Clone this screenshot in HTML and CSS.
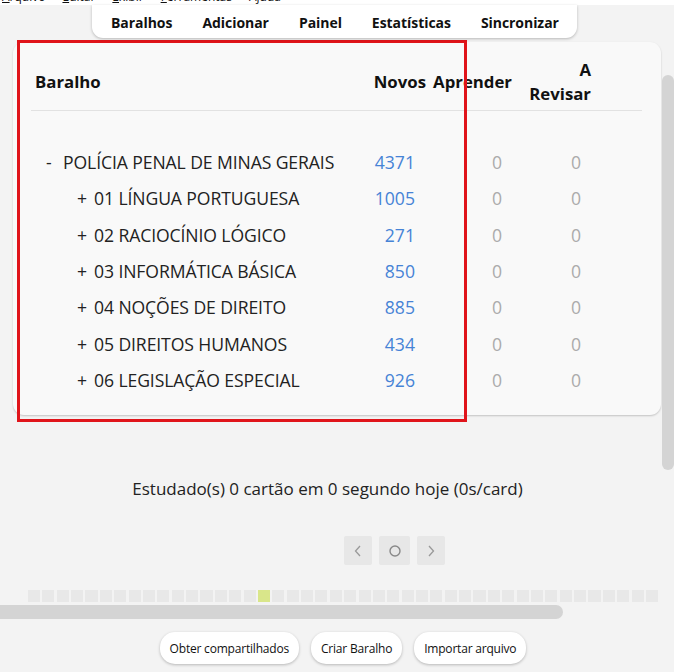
FILE: index.html
```html
<!DOCTYPE html>
<html lang="pt">
<head>
<meta charset="utf-8">
<title>Anki</title>
<link rel="stylesheet" href="styles.css">
</head>
<body>
<div class="menubar">
  <span class="menu"><u>A</u>rquivo</span>
  <span class="menu"><u>E</u>ditar</span>
  <span class="menu"><u>E</u>xibir</span>
  <span class="menu"><u>F</u>erramentas</span>
  <span class="menu">A<u>j</u>uda</span>
</div>
<div class="toolbar-row">
  <nav class="toolbar">
    <span class="tb-item">Baralhos</span>
    <span class="tb-item">Adicionar</span>
    <span class="tb-item">Painel</span>
    <span class="tb-item">Estatísticas</span>
    <span class="tb-item">Sincronizar</span>
  </nav>
</div>
<main class="main">
  <section class="card">
    <div class="grid head">
      <div class="h-name">Baralho</div>
      <div class="h-num">Novos</div>
      <div class="h-num">Aprender</div>
      <div class="h-num"><span class="h-wrap">A Revisar</span></div>
      <div></div>
    </div>
    <div class="rows">
      <div class="grid row">
        <div class="name"><span class="tog">-</span>POLÍCIA PENAL DE MINAS GERAIS</div>
        <div class="num new">4371</div><div class="num zero">0</div><div class="num zero">0</div><div></div>
      </div>
      <div class="grid row">
        <div class="name child"><span class="tog">+</span>01 LÍNGUA PORTUGUESA</div>
        <div class="num new">1005</div><div class="num zero">0</div><div class="num zero">0</div><div></div>
      </div>
      <div class="grid row">
        <div class="name child"><span class="tog">+</span>02 RACIOCÍNIO LÓGICO</div>
        <div class="num new">271</div><div class="num zero">0</div><div class="num zero">0</div><div></div>
      </div>
      <div class="grid row">
        <div class="name child"><span class="tog">+</span>03 INFORMÁTICA BÁSICA</div>
        <div class="num new">850</div><div class="num zero">0</div><div class="num zero">0</div><div></div>
      </div>
      <div class="grid row">
        <div class="name child"><span class="tog">+</span>04 NOÇÕES DE DIREITO</div>
        <div class="num new">885</div><div class="num zero">0</div><div class="num zero">0</div><div></div>
      </div>
      <div class="grid row">
        <div class="name child"><span class="tog">+</span>05 DIREITOS HUMANOS</div>
        <div class="num new">434</div><div class="num zero">0</div><div class="num zero">0</div><div></div>
      </div>
      <div class="grid row">
        <div class="name child"><span class="tog">+</span>06 LEGISLAÇÃO ESPECIAL</div>
        <div class="num new">926</div><div class="num zero">0</div><div class="num zero">0</div><div></div>
      </div>
    </div>
  </section>
  <p class="stats">Estudado(s) 0 cartão em 0 segundo hoje (0s/card)</p>
  <div class="pager">
    <span class="pbtn"><svg width="10" height="14" viewBox="0 0 10 14"><path d="M7 2 L2.5 7 L7 12" fill="none" stroke="#999" stroke-width="1.3"/></svg></span>
    <span class="pbtn mid"><svg width="14" height="14" viewBox="0 0 14 14"><circle cx="7" cy="7" r="5" fill="none" stroke="#888" stroke-width="1.4"/></svg></span>
    <span class="pbtn"><svg width="10" height="14" viewBox="0 0 10 14"><path d="M3 2 L7.5 7 L3 12" fill="none" stroke="#999" stroke-width="1.3"/></svg></span>
  </div>
  <div class="heatmap" id="heatmap"></div>
  <div class="vscroll"></div>
  <div class="hscroll"></div>
  <div class="annot"></div>
</main>
<footer class="bottombar">
  <button class="pill">Obter compartilhados</button>
  <button class="pill">Criar Baralho</button>
  <button class="pill">Importar arquivo</button>
</footer>
<script>
  var hm = document.getElementById('heatmap');
  for (var i = 0; i < 44; i++) {
    var c = document.createElement('span');
    c.className = 'cell' + (i === 16 ? ' today' : '');
    hm.appendChild(c);
  }
</script>
</body>
</html>
```
FILE: styles.css
```css
* { box-sizing: border-box; }
html, body { margin: 0; padding: 0; }
body {
  width: 674px;
  height: 672px;
  overflow: hidden;
  background: #f3f3f3;
  font-family: "Open Sans", "Noto Sans", sans-serif;
  color: #1e1e1e;
}

.menubar {
  height: 5px;
  background: #fff;
  overflow: hidden;
  display: flex;
  gap: 17px;
  padding-left: 2px;
  font-size: 12px;
  line-height: 12px;
}
.menu { margin-top: -9px; color: #111; }

.toolbar-row {
  display: flex;
  padding-left: 92px;
  height: 33px;
}
.toolbar {
  display: flex;
  align-items: center;
  gap: 30px;
  padding: 1px 18px 0 19px;
  height: 33px;
  background: #fff;
  border-radius: 0 0 11px 11px;
  box-shadow: 0 1px 3px rgba(0,0,0,0.25);
  position: relative;
  z-index: 1;
}
.tb-item {
  font-weight: 700;
  font-size: 14px;
  color: #111;
  letter-spacing: -0.05px;
}

.main {
  position: relative;
  height: 582px;
  padding-top: 4px;
}

.card {
  margin-left: 13px;
  width: 648px;
  height: 373px;
  background: #f9f9f9;
  border-radius: 11px;
  box-shadow: 0 1px 2px rgba(0,0,0,0.2);
  padding: 16px 19px 0 18px;
}
.grid {
  display: grid;
  grid-template-columns: 1fr 60px 86px 79px 51px;
  align-items: center;
}
.head {
  border-bottom: 1px solid #e2e2e2;
  padding-bottom: 4px;
  font-weight: 700;
  font-size: 16.8px;
  line-height: 24px;
  color: #111;
}
.h-name { padding-left: 4px; }
.h-num { text-align: right; }
.h-wrap { display: inline-block; width: 64px; text-align: right; }

.rows { padding-top: 33px; }
.row {
  height: 36.3px;
  font-size: 17.6px;
  line-height: 24px;
}
.name {
  padding-left: 15px;
  color: #222;
  white-space: nowrap;
  letter-spacing: -0.1px;
}
.name.child { padding-left: 46px; }
.tog { display: inline-block; width: 17px; }
.num { text-align: right; padding-right: 11px; }
.num.zero { padding-right: 10px; }
.new { color: #4683d6; }
.zero { color: #ababab; }

.stats {
  margin: 62px 0 0;
  width: 655px;
  text-align: center;
  font-size: 17px;
  line-height: 24px;
  color: #222;
}

.pager {
  display: flex;
  gap: 7px;
  margin: 35px 0 0 344px;
}
.pbtn {
  width: 28px;
  height: 29px;
  background: #e7e7e7;
  border-radius: 2px;
  display: flex;
  align-items: center;
  justify-content: center;
}
.pbtn.mid { width: 31px; }

.heatmap {
  display: grid;
  grid-template-columns: repeat(44, 1fr);
  gap: 2.3px;
  width: 630px;
  margin: 25px 0 0 28px;
}
.cell { height: 12px; background: #e8e8e8; }
.cell.today { background: #d9e68a; }

.vscroll {
  position: absolute;
  right: 0;
  top: 37px;
  width: 12px;
  height: 395px;
  background: #d4d4d4;
  border-radius: 6px;
}
.hscroll {
  position: absolute;
  left: 0;
  bottom: 1px;
  width: 563px;
  height: 14px;
  background: #d4d4d4;
  border-radius: 0 7px 7px 0;
}
.annot {
  position: absolute;
  left: 17px;
  top: 2px;
  width: 450px;
  height: 382px;
  border: 3px solid #e0141a;
  pointer-events: none;
}

.bottombar {
  display: flex;
  justify-content: center;
  gap: 12px;
  padding: 12px 0 0 12px;
}
.pill {
  height: 32px;
  padding: 0 10px;
  background: #fff;
  border: none;
  border-radius: 15px;
  box-shadow: 0 1px 3px rgba(0,0,0,0.25);
  font-family: "Open Sans", sans-serif;
  font-size: 12px;
  color: #111;
  letter-spacing: -0.2px;
}
```
